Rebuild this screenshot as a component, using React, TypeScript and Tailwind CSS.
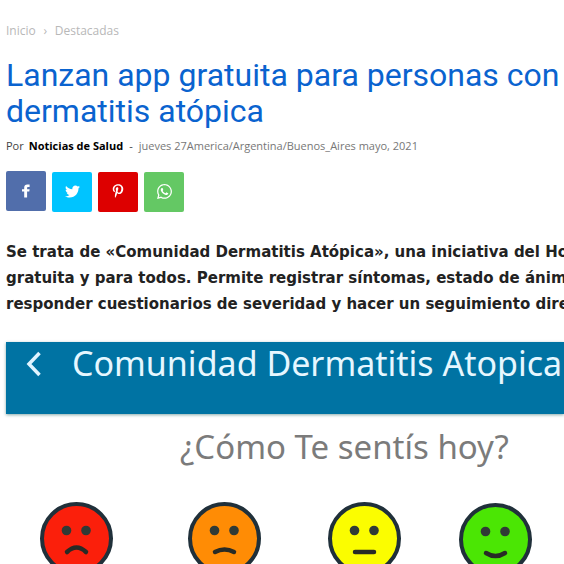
import React from "react";
import { FaTwitter, FaPinterestP, FaWhatsapp } from "react-icons/fa";

type Mood = { name: string; fill: string; mouth: string; place: string };

const moods: Mood[] = [
  { name: "Muy mal", fill: "#fb1f0b", mouth: "M27 50 Q36.500 41 46 50", place: "" },
  { name: "Mal", fill: "#ff8c05", mouth: "M27 50 Q36.500 45 46 50", place: "ml-[75px]" },
  { name: "Regular", fill: "#fbfd00", mouth: "M27 50 H46", place: "ml-[67px]" },
  { name: "Bien", fill: "#4be604", mouth: "M27 50 Q36.500 56 46 50", place: "ml-[58px] mt-px" },
];

function FacebookIcon({ className }: { className: string }) {
  return (
    <svg viewBox="0 0 16 16" className={className} fill="currentColor">
      <path d="M6.200 14.500 V8.500 H4 V6.200 H6.200 V4.600 C6.200 2.600 7.400 1.500 9.300 1.500 H11.600 V3.900 H10.200 C9.300 3.900 9.100 4.300 9.100 5 V6.200 H11.600 L11.300 8.500 H9.100 V14.500 Z" />
    </svg>
  );
}

const shares = [
  { name: "Facebook", Icon: FacebookIcon, look: "bg-[#516eab] mb-px", icon: "size-4" },
  { name: "Twitter", Icon: FaTwitter, look: "bg-[#00c4ff] mt-px pb-0.5", icon: "size-[15px]" },
  { name: "Pinterest", Icon: FaPinterestP, look: "bg-[#dd0000] mt-px pb-0.5", icon: "size-[14px]" },
  { name: "WhatsApp", Icon: FaWhatsapp, look: "bg-[#64c864] mt-px pb-0.5", icon: "size-[17px]" },
];

function Face({ name, fill, mouth, place }: Mood) {
  return (
    <button type="button" aria-label={name} className={`shrink-0 ${place}`}>
      <svg viewBox="0 0 73 73" className="block size-[73px]" fill="none">
        <circle cx="36.500" cy="36.500" r="34.500" fill={fill} stroke="#20303a" strokeWidth="4" />
        <circle cx="26.500" cy="28.500" r="4.800" fill="#303a36" />
        <circle cx="46" cy="28.500" r="4.800" fill="#303a36" />
        <path d={mouth} stroke="#282b26" strokeWidth="4.500" strokeLinecap="round" />
      </svg>
    </button>
  );
}

export default function App() {
  return (
    <main className="h-screen overflow-hidden bg-white pl-1.5 font-['Open_Sans',sans-serif]">
      <nav aria-label="Ruta" className="mt-5 flex h-5 items-center pt-px text-[12px] text-[#b8b8b8]">
        <a href="#inicio">Inicio</a>
        <span className="w-[19px] text-center">›</span>
        <a href="#destacadas">Destacadas</a>
      </nav>

      <h1 className="mt-[17px] font-['Roboto',sans-serif] text-[32px] leading-9 text-[#0a63cf]">
        Lanzan app gratuita para personas con dermatitis atópica
      </h1>

      <div className="mt-[7px] flex h-5 items-center whitespace-nowrap text-[11px] text-[#444]">
        <span>Por</span>
        <a href="#autor" className="ml-[5px] font-bold text-black">Noticias de Salud</a>
        <span className="mx-1.5">-</span>
        <time className="text-[#777]">jueves 27America/Argentina/Buenos_Aires mayo, 2021</time>
      </div>

      <div className="mt-[15px] flex gap-1.5">
        {shares.map(({ name, Icon, look, icon }) => (
          <a
            key={name}
            href={`#${name}`}
            aria-label={name}
            className={`flex size-10 items-center justify-center rounded-xs text-white ${look}`}
          >
            <Icon className={icon} />
          </a>
        ))}
      </div>

      <p className="mt-[27px] whitespace-nowrap font-['DejaVu_Sans',Verdana,sans-serif] text-[15px] leading-[26px] font-bold text-[#222]">
        Se trata de «Comunidad Dermatitis Atópica», una iniciativa del Ho
        <br />
        gratuita y para todos. Permite registrar síntomas, estado de ánimo
        <br />
        responder cuestionarios de severidad y hacer un seguimiento dire
      </p>

      <section className="mt-[25px] font-['Noto_Sans',sans-serif]">
        <header className="flex h-[72px] items-start bg-[#0073a3] shadow-[0_1px_3px_#8aa]">
          <button type="button" aria-label="Volver" className="mt-[9px] ml-5 w-[46px] shrink-0">
            <svg viewBox="0 0 15 26" className="block h-[26px] w-[15px]" fill="none" stroke="#e0f4ff" strokeWidth="3.500">
              <path d="M13.500 2 L3 13 L13.500 24" />
            </svg>
          </button>
          <h2 className="whitespace-nowrap text-[34px] leading-[42px] text-[#e6f7ff]">Comunidad Dermatitis Atopica</h2>
        </header>
        <p className="mt-[11px] ml-[174px] whitespace-nowrap text-[33px] leading-[44px] text-[#7b7b7b]">¿Cómo Te sentís hoy?</p>
        <div className="mt-[33px] ml-[34px] flex items-start">
          {moods.map((mood) => (
            <Face key={mood.name} {...mood} />
          ))}
        </div>
      </section>
    </main>
  );
}
